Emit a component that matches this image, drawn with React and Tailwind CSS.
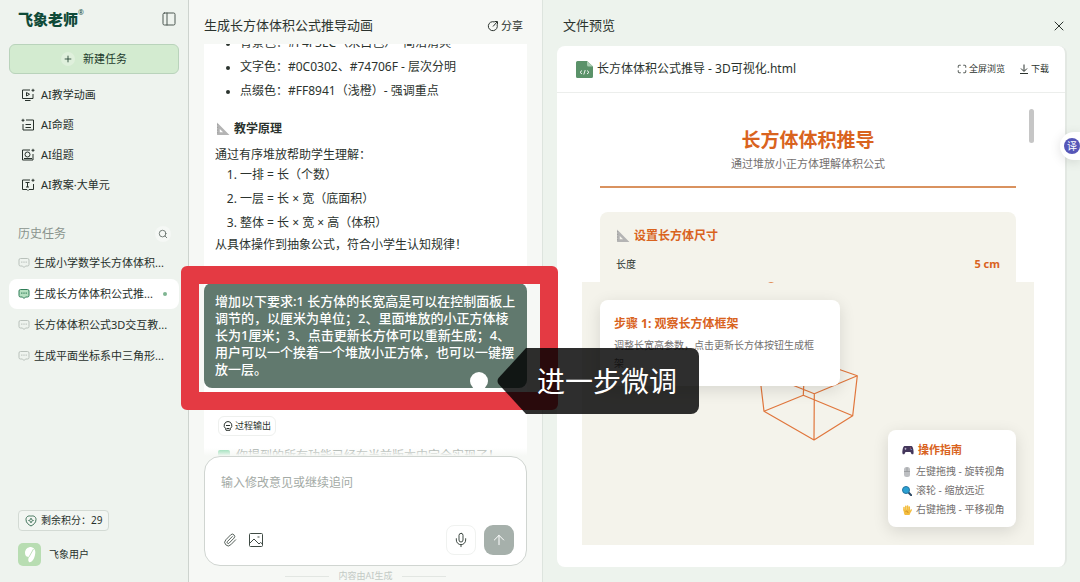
import { useState } from 'react';
import { ArrowUp, Maximize, Mic, PanelLeft, Paperclip, Plus, Search, X } from 'lucide-react';

const historyItems = [
  { id: 1, title: '生成小学数学长方体体积...' },
  { id: 2, title: '生成长方体体积公式推...' },
  { id: 3, title: '长方体体积公式3D交互教...' },
  { id: 4, title: '生成平面坐标系中三角形...' },
];

const NavIcon = ({ children }) => (
  <svg viewBox="0 0 14 14" className="size-3.5 shrink-0" fill="none" stroke="currentColor" strokeWidth="1" aria-hidden="true">
    {children}
  </svg>
);

const navItems = [
  {
    label: 'AI教学动画',
    icon: (
      <NavIcon>
        <path d="M9 2H1.5v8.5H12V6M4 12.5h5.5M5.5 4.5v3.5l3-1.75zM12 .8v3M10.5 2.3h3" />
      </NavIcon>
    ),
  },
  {
    label: 'AI命题',
    icon: (
      <NavIcon>
        <path d="M5 2h7.5v10H2V6M4.5 6.5H10M4.5 9.5H10M2 .8v3M.5 2.3h3" />
      </NavIcon>
    ),
  },
  {
    label: 'AI组题',
    icon: (
      <NavIcon>
        <path d="M9 2H1.5v10H12V6M3 10.5h8M12 .8v3M10.5 2.3h3" />
        <circle cx="6.5" cy="6.5" r="2.5" />
      </NavIcon>
    ),
  },
  {
    label: 'AI教案·大单元',
    icon: (
      <NavIcon>
        <path d="M9 2H1.5v9.5H6l1 1 1-1h4.5V6M4.5 4.5h4M6.5 4.5V9M5 9h3M12 .8v3M10.5 2.3h3" />
      </NavIcon>
    ),
  },
];

const ChatIcon = ({ active }) => (
  <svg viewBox="0 0 12 12" className={`size-3 shrink-0 ${active ? 'text-[#2f7d57]' : 'text-[#b9c1bb]'}`} aria-hidden="true">
    <path
      d="M2.5 1.5h7A1.5 1.5 0 0 1 11 3v4.500a1.500 1.500 0 0 1-1.500 1.500H7.500L6 10.500 4.500 9h-2A1.500 1.500 0 0 1 1 7.500V3a1.500 1.500 0 0 1 1.500-1.500z"
      fill={active ? '#b5dfc0' : 'none'}
      stroke="currentColor"
    />
    <path d="M3.2 5.2h1.2M5.4 5.2h1.2M7.6 5.2h1.2" stroke="currentColor" strokeWidth="1.2" />
  </svg>
);

const RulerIcon = () => (
  <svg viewBox="0 0 13 13" className="size-3.5 shrink-0" aria-hidden="true">
    <path d="M1 0.5L12.5 12H1z M3.5 6.5V9.6H6.6z" fill="#b4b4b4" fillRule="evenodd" />
    <path d="M1 2.5h1M1 5h1M1 7.5h1M1 10h1" stroke="#8a8a8a" strokeWidth="0.6" />
  </svg>
);

const Sidebar = () => {
  const [activeId, setActiveId] = useState(2);

  return (
    <aside className="flex w-[189px] shrink-0 flex-col border-r border-[#cdd3ce] bg-[#eef3ee] px-[9px] pb-4">
      <div className="flex h-11 items-center justify-between pr-0.5 pl-[9px] pb-1.5">
        <div className="flex items-start text-[#0f4a38]">
          <span className="text-[15px] leading-5 font-black">飞象老师</span>
          <span className="text-[7px] leading-2">®</span>
        </div>
        <button type="button" aria-label="收起侧栏" className="text-[#4d5852]">
          <PanelLeft className="size-4" strokeWidth={1.5} />
        </button>
      </div>

      <button
        type="button"
        className="flex h-[30px] shrink-0 items-center justify-center gap-2 rounded-md border border-[#b9d3bb] bg-[#d3ebd0] text-[11px] text-[#1c3a2c]"
      >
        <span className="flex size-3.5 items-center justify-center rounded-full bg-[#dff0dc]">
          <Plus className="size-2.5" strokeWidth={2} />
        </span>
        新建任务
      </button>

      <nav className="mt-1.5 flex flex-col">
        {navItems.map((item) => (
          <a key={item.label} href="#" className="flex h-[30px] items-center gap-1.5 pl-3 text-[11px] text-[#27302b]">
            {item.icon}
            {item.label}
          </a>
        ))}
      </nav>

      <div className="mt-5 flex h-7 items-center justify-between pr-2 pl-[9px]">
        <h2 className="text-xs text-[#8a938d]">历史任务</h2>
        <button type="button" aria-label="搜索" className="flex size-4 items-center justify-center rounded-full bg-[#f5f8f5] text-[#5e6963]">
          <Search className="size-2.5" strokeWidth={2} />
        </button>
      </div>

      <ul className="flex flex-col gap-px">
        {historyItems.map((item) => {
          const active = item.id === activeId;
          return (
            <li key={item.id}>
              <button
                type="button"
                onClick={() => setActiveId(item.id)}
                className={`flex h-[30px] w-full items-center gap-1 rounded-lg pl-[9px] text-left text-[11px] text-[#27302b] ${active ? 'bg-white' : ''}`}
              >
                <ChatIcon active={active} />
                <span className="whitespace-nowrap">{item.title}</span>
                {active && <span className="mr-3 ml-auto size-1 shrink-0 rounded-full bg-[#7fb592]" />}
              </button>
            </li>
          );
        })}
      </ul>

      <div className="mt-auto flex flex-col items-start gap-3 pl-[9px]">
        <div className="flex h-[21px] items-center gap-1 rounded-sm border border-[#d3dad4] bg-[#f2f6f2] px-1.5 text-[10px] text-[#27302b]">
          <svg viewBox="0 0 12 12" className="size-3" fill="none" stroke="#3f7259" aria-hidden="true">
            <path d="M6 1.2c1.500-.7 5-.2 5 3.300C11 8 8.500 9.500 6 11 3.500 9.500 1 8 1 4.500 1 1 4.500.5 6 1.200z" />
            <path d="M6 3l.7 1.800 1.800.7-1.800.7L6 8l-.7-1.800-1.800-.7 1.800-.7z" strokeWidth="0.800" />
          </svg>
          剩余积分：29
        </div>
        <div className="flex items-center gap-2 text-[10px] text-[#27302b]">
          <svg viewBox="0 0 23 23" className="size-[23px]" aria-hidden="true">
            <rect width="23" height="23" rx="5" fill="#b8ddb2" />
            <path d="M13 4c4 1 5 4 4 8-1 5-4 8-6 7-1-1-1-3 0-5-2 0-4-1-4-4 0-4 3-6 6-6z" fill="#fff" />
            <path d="M15.5 6l-4.5 8" stroke="#b8ddb2" strokeWidth="0.9" />
          </svg>
          飞象用户
        </div>
      </div>
    </aside>
  );
};

const Composer = () => {
  const [message, setMessage] = useState('');

  return (
    <form
      className="flex h-[110px] shrink-0 flex-col rounded-2xl border border-[#d0d5d1] bg-white px-3 pt-[18px] pb-2.5"
      onSubmit={(e) => e.preventDefault()}
    >
      <textarea
        aria-label="修改意见"
        placeholder="输入修改意见或继续追问"
        value={message}
        onChange={(e) => setMessage(e.target.value)}
        className="min-h-0 flex-1 resize-none px-1 text-xs leading-4 text-[#27302b] outline-none placeholder:text-[#a3aaa5]"
      />
      <div className="flex items-center text-[#3f4a44]">
        <button type="button" aria-label="添加附件" className="ml-1.5">
          <Paperclip className="size-3.5" strokeWidth={1.5} />
        </button>
        <button type="button" aria-label="添加图片" className="ml-3">
          <svg viewBox="0 0 14 14" className="size-3.5" fill="none" stroke="currentColor" aria-hidden="true">
            <rect x="0.5" y="0.5" width="13" height="13" rx="1" />
            <path d="M1 10l4-4 5 5 1.500-1.500 2 1.500M8.500 4h2" />
          </svg>
        </button>
        <button type="button" aria-label="语音输入" className="ml-auto flex size-[30px] items-center justify-center rounded-lg border border-[#f0f2f0]">
          <Mic className="size-4" strokeWidth={1.5} />
        </button>
        <button type="submit" aria-label="发送" className="ml-2 flex size-[30px] items-center justify-center rounded-[9px] bg-[#a6b0ab] text-white">
          <ArrowUp className="size-4" strokeWidth={1.5} />
        </button>
      </div>
    </form>
  );
};

const ChatPanel = () => (
  <main className="flex w-[354px] shrink-0 flex-col border-r border-[#dde4de] bg-[#f6f8f5] px-[15px]">
    <header className="flex h-11 shrink-0 items-center justify-between pt-2 pr-1 text-[#2b332e]">
      <h1 className="text-[13px]">生成长方体体积公式推导动画</h1>
      <button type="button" className="flex items-center gap-0.5 text-[11px]">
        <svg viewBox="0 0 12 12" className="size-3" fill="none" stroke="currentColor" aria-hidden="true">
          <path d="M10 4.5A4.500 4.500 0 1 1 7.500 2M6 6.500l4-4.500M7.500 1.500h3v3" />
        </svg>
        分享
      </button>
    </header>

    <div className="relative min-h-0 flex-1 overflow-hidden bg-white text-xs text-[#2b332e]">
      <div className="-mt-[13px] whitespace-nowrap">
        <ul className="list-disc pl-9 leading-6 marker:text-[10px]">
          <li>背景色：#F4F3EC（米白色）- 简洁清爽</li>
          <li>文字色：#0C0302、#74706F - 层次分明</li>
          <li>点缀色：#FF8941（浅橙）- 强调重点</li>
        </ul>
        <h3 className="mt-4 flex items-center gap-1 pl-3 leading-5 font-bold">
          <RulerIcon />
          教学原理
        </h3>
        <p className="mt-2 pl-[11px] leading-4">通过有序堆放帮助学生理解：</p>
        <ol className="list-decimal pl-9 leading-6">
          <li>一排 = 长（个数）</li>
          <li>一层 = 长 × 宽（底面积）</li>
          <li>整体 = 长 × 宽 × 高（体积）</li>
        </ol>
        <p className="pl-[11px] leading-5">从具体操作到抽象公式，符合小学生认知规律！</p>

        <div className="mt-7 rounded-lg bg-[#61796e] px-[11px] py-2.5 text-[13px] leading-[17px] font-medium text-white">
          增加以下要求:1 长方体的长宽高是可以在控制面板上
          <br />
          调节的，以厘米为单位；2、里面堆放的小正方体棱
          <br />
          长为1厘米；3、点击更新长方体可以重新生成；4、
          <br />
          用户可以一个挨着一个堆放小正方体，也可以一键摆
          <br />
          放一层。
        </div>

        <button type="button" className="mt-7 ml-3.5 flex h-5 items-center gap-0.5 rounded-md border border-[#eef0ee] px-1 text-[9px]">
          <svg viewBox="0 0 10 10" className="size-2.5" fill="none" stroke="currentColor" aria-hidden="true">
            <path d="M5 .5a4 4 0 0 1 2.500 7L7 9.300H3L2.500 7.500A4 4 0 0 1 5 .5zM3 4.500h4M3.500 7.500h3" />
          </svg>
          过程输出
        </button>
        <p className="mt-2 flex items-center gap-1.5 pl-3.5 leading-6 text-[#9aa39d]">
          <span className="size-3 rounded-xs bg-[#8ddcb0]" />
          你提到的所有功能已经在当前版本中完全实现了！
        </p>
      </div>
      <div className="absolute inset-x-0 bottom-0 h-2 bg-linear-to-t from-[#f6f8f5] to-transparent" />
    </div>

    <Composer />

    <footer className="flex h-4 shrink-0 items-center justify-center gap-2.5 pt-1 text-[9px] leading-3 text-[#c3cac5]">
      <span className="h-px w-11 bg-[#e2e6e2]" />
      内容由AI生成
      <span className="h-px w-11 bg-[#e2e6e2]" />
    </footer>
  </main>
);

const guideItems = [
  {
    label: '左键拖拽 - 旋转视角',
    icon: (
      <svg viewBox="0 0 10 10" className="size-2.5 shrink-0" aria-hidden="true">
        <rect x="2" y="0" width="6" height="10" rx="2.5" fill="#bdbfc2" />
        <path d="M5 0.5v4M2 4.5h6" stroke="#8f9295" strokeWidth="0.7" />
      </svg>
    ),
  },
  {
    label: '滚轮 - 缩放远近',
    icon: (
      <svg viewBox="0 0 10 10" className="size-2.5 shrink-0" aria-hidden="true">
        <path d="M6 6l3.2 3.2" stroke="#2f4b66" strokeWidth="2" strokeLinecap="round" />
        <circle cx="4" cy="4" r="3.5" fill="#2aa1d3" stroke="#2675a0" />
      </svg>
    ),
  },
  {
    label: '右键拖拽 - 平移视角',
    icon: (
      <svg viewBox="0 0 10 10" className="size-2.5 shrink-0" aria-hidden="true">
        <path d="M2 5V2.5M3.8 4.5V1.2M5.6 4.5V1M7.3 5V2M8.2 7l1-2" stroke="#f3bd3e" strokeWidth="1.5" strokeLinecap="round" />
        <path d="M1.3 4.5h6.8V7a3 3 0 0 1-6 1.5z" fill="#f3bd3e" />
        <path d="M3.5 6.5c1.5-.8 2.5 0 2.5 1.5" stroke="#c07f1c" strokeWidth="0.7" fill="none" />
      </svg>
    ),
  },
];

const PreviewCanvas = () => (
  <div className="relative mr-[31px] ml-[25px] min-h-0 flex-1 overflow-hidden bg-[#f4f3eb]">
    {/* wireframe box */}
    <svg
      viewBox="0 0 452 263"
      className="absolute top-0 left-0 h-[263px] w-[452px]"
      fill="none"
      stroke="#e0763c"
      strokeWidth="1.2"
      strokeLinejoin="round"
      aria-hidden="true"
    >
      <path d="M177.300 89.700L223 75.500 275.300 93.700 232.300 111.700zM182 129.300L221.300 113.300 270.700 133.700 232 158zM177.300 89.700L182 129.300M223 75.500L221.300 113.300M275.300 93.700L270.700 133.700M232.300 111.700L232 158" />
      {/* bottom edge of the slider thumb */}
      <path d="M186 0q3 1.500 6 0z" fill="#d9631e" stroke="none" />
    </svg>

    <section className="absolute top-[18px] left-[18px] h-[86px] w-60 rounded-lg bg-white px-3.5 py-4 whitespace-nowrap shadow-[0_4px_16px_rgba(0,0,0,0.12)]">
      <h3 className="text-xs leading-4 font-bold text-[#d9631e]">步骤 1: 观察长方体框架</h3>
      <p className="mt-1 text-[10px] leading-[18px] text-[#74706f]">
        调整长宽高参数，点击更新长方体按钮生成框
        <br />
        架
      </p>
    </section>

    <section className="absolute right-[18px] bottom-[18px] w-32 rounded-lg bg-white px-3.5 pt-2 pb-2 whitespace-nowrap shadow-[0_4px_16px_rgba(0,0,0,0.12)]">
      <h3 className="flex items-center gap-1 text-[11px] leading-6 font-bold text-[#d9631e]">
        <svg viewBox="0 0 12 10" className="h-2.5 w-3" aria-hidden="true">
          <path d="M2.5 1h7C11 1 12 6.5 11.5 8.5c-.4 1.300-1.700 1-2.300 0L8.500 7h-5l-.7 1.500c-.6 1-1.900 1.300-2.300 0C0 6.500 1 1 2.500 1z" fill="#43365b" />
          <path d="M2.5 3.8h2M3.5 2.8v2" stroke="#cfc6df" strokeWidth="0.7" />
          <circle cx="8.5" cy="3" r="0.6" fill="#e06a6a" />
          <circle cx="9.2" cy="4.5" r="0.6" fill="#7ab6e6" />
        </svg>
        操作指南
      </h3>
      <ul className="text-[10px] leading-[19px] text-[#74706f]">
        {guideItems.map((item) => (
          <li key={item.label} className="flex items-center gap-1">
            {item.icon}
            {item.label}
          </li>
        ))}
      </ul>
    </section>
  </div>
);

const PreviewPanel = () => (
  <section className="flex min-w-0 flex-1 flex-col bg-[#edf3ed] pr-[13px] pb-[15px] pl-3.5 text-[#2b332e]">
    <header className="flex h-[46px] shrink-0 items-center justify-between pt-1.5 pl-1.5">
      <h2 className="text-[13px]">文件预览</h2>
      <button type="button" aria-label="关闭">
        <X className="size-4" strokeWidth={1.5} />
      </button>
    </header>

    <div className="flex min-h-0 flex-1 flex-col rounded-lg border-r-2 border-[#e3e8e3] bg-white pb-[22px]">
      <div className="flex h-[47px] shrink-0 items-center border-b border-[#eceeec] pr-4 pl-[19px]">
        <svg viewBox="0 0 17 17" className="size-[17px]" aria-hidden="true">
          <path d="M1.5 0H11l6 5.5v10a1.500 1.500 0 0 1-1.500 1.500h-14A1.500 1.500 0 0 1 0 15.500v-14A1.500 1.500 0 0 1 1.500 0z" fill="#5a9269" />
          <path d="M11 0l6 5.5h-4.500A1.500 1.500 0 0 1 11 4z" fill="#a9cdb2" />
          <path d="M6 9.5L4 11.300 6 13M11 9.500l2 1.800L11 13M9.200 9L7.800 13.500" stroke="#fff" strokeWidth="0.9" fill="none" />
        </svg>
        <span className="ml-1 text-xs whitespace-nowrap">长方体体积公式推导 - 3D可视化.html</span>
        <button type="button" className="ml-auto flex items-center gap-0.5 text-[9px]">
          <Maximize className="size-2.5" strokeWidth={2} />
          全屏浏览
        </button>
        <button type="button" className="ml-3.5 flex items-center gap-0.5 text-[9px]">
          <svg viewBox="0 0 10 10" className="size-2.5" fill="none" stroke="currentColor" aria-hidden="true">
            <path d="M5 .5V7M2 4.5L5 7.500l3-3M1 9.500h8" />
          </svg>
          下载
        </button>
      </div>

      <div className="relative mr-[49px] ml-[43px] shrink-0">
        <div className="border-b-2 border-[#d9925f] pt-[33px] pb-3 text-center">
          <h1 className="text-[19px] leading-7 font-bold text-[#d9631e]">长方体体积推导</h1>
          <p className="text-[11px] leading-5 text-[#74706f]">通过堆放小正方体理解体积公式</p>
        </div>
        <div className="mt-6 rounded-t-lg bg-[#f4f3eb] px-4 pt-3.5">
          <h3 className="flex items-center gap-1 text-xs leading-5 font-bold text-[#d9631e]">
            <RulerIcon />
            设置长方体尺寸
          </h3>
          <div className="mt-2 flex items-center justify-between pb-2 leading-5">
            <span className="text-[10px]">长度</span>
            <span className="text-[11px] font-bold text-[#d9631e]">5 cm</span>
          </div>
        </div>
        {/* scroll thumb of the preview page */}
        <div className="absolute top-4 -right-[18px] h-[34px] w-[5px] rounded-full bg-[#c6c6c6]" />
      </div>
      <PreviewCanvas />
    </div>
  </section>
);

const Callout = () => (
  <>
    <div className="absolute top-[266px] left-[181px] h-36 w-[377px] rounded-md border-[18px] border-[#e43a43]" />
    <div className="absolute top-[372px] left-[470px] size-[18px] rounded-full bg-white" />
    <div className="absolute top-[348px] left-[497px] flex h-[66px]">
      <svg viewBox="0 0 30 66" className="h-full w-[30px]" aria-hidden="true">
        <path d="M30 0h-1L1.5 30Q-.5 33 1.5 36L29 66h1z" fill="#000" fillOpacity="0.82" />
      </svg>
      <div className="flex items-center rounded-r-lg bg-black/82 pr-[22px] pl-2.5 text-[28px] whitespace-nowrap text-white">
        进一步微调
      </div>
    </div>
  </>
);

const App = () => (
  <div className="relative flex h-screen w-full overflow-hidden font-['Noto_Sans','Noto_Sans_CJK_SC',sans-serif]" lang="zh-CN">
    <Sidebar />
    <ChatPanel />
    <PreviewPanel />
    <Callout />
    <button
      type="button"
      aria-label="翻译"
      className="absolute top-[132px] right-0 flex h-7 items-center rounded-l-full bg-white pl-1 shadow-[0_2px_12px_rgba(0,0,0,0.12)]"
    >
      <span className="flex size-4 items-center justify-center rounded-full bg-[#5657b8] text-[10px] text-white">译</span>
    </button>
  </div>
);

export default App;
